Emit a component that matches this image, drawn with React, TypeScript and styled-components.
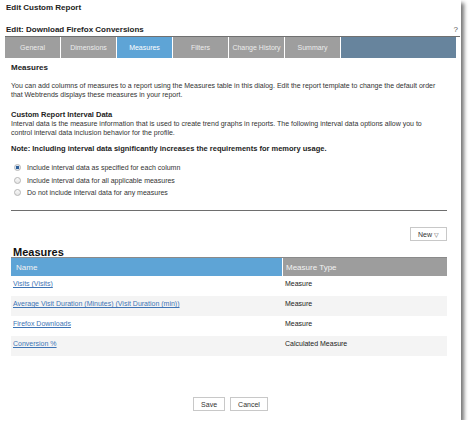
import React, { useState } from 'react';
import styled, { createGlobalStyle } from 'styled-components';

interface MeasureRow {
  id: number
  name: string
  type: string
}

const tabs = ['General', 'Dimensions', 'Measures', 'Filters', 'Change History', 'Summary'];

const intervalOptions = [
  'Include interval data as specified for each column',
  'Include interval data for all applicable measures',
  'Do not include interval data for any measures',
];

const App: React.FC = () => {
  const [activeTab] = useState('Measures');
  const [interval, setInterval] = useState(0);
  const [rows] = useState<MeasureRow[]>([
    { id: 1, name: 'Visits (Visits)', type: 'Measure' },
    { id: 2, name: 'Average Visit Duration (Minutes) (Visit Duration (min))', type: 'Measure' },
    { id: 3, name: 'Firefox Downloads', type: 'Measure' },
    { id: 4, name: 'Conversion %', type: 'Calculated Measure' },
  ]);

  return (
    <>
      <GlobalStyle />
      <Dialog>
        <DialogTitle>Edit Custom Report</DialogTitle>
        <EditHeader>
          <span>Edit: Download Firefox Conversions</span>
          <Help>?</Help>
        </EditHeader>
        <TabBar>
          {tabs.map((tab) => (
            <Tab key={tab} $active={tab === activeTab}>{tab}</Tab>
          ))}
          <TabFiller />
        </TabBar>

        <Content>
          <SectionTitle>Measures</SectionTitle>
          <Paragraph>
            You can add columns of measures to a report using the Measures table in this dialog. Edit the report template to change the default order
            that Webtrends displays these measures in your report.
          </Paragraph>
          <SubTitle>Custom Report Interval Data</SubTitle>
          <Paragraph $tight>
            Interval data is the measure information that is used to create trend graphs in reports. The following interval data options allow you to
            control interval data inclusion behavior for the profile.
          </Paragraph>
          <Note>Note: Including interval data significantly increases the requirements for memory usage.</Note>

          <RadioList>
            {intervalOptions.map((label, i) => (
              <RadioRow key={label} onClick={() => setInterval(i)}>
                <RadioDot $checked={interval === i} />
                {label}
              </RadioRow>
            ))}
          </RadioList>

          <Rule />

          <ToolRow>
            <SmallButton>New <Caret>▽</Caret></SmallButton>
          </ToolRow>

          <TableTitle>Measures</TableTitle>
          <Table>
            <HeadRow>
              <NameHead>Name</NameHead>
              <TypeHead>Measure Type</TypeHead>
            </HeadRow>
            {rows.map((row, i) => (
              <BodyRow key={row.id} $striped={i % 2 === 1}>
                <NameCell><a href="#">{row.name}</a></NameCell>
                <TypeCell>{row.type}</TypeCell>
              </BodyRow>
            ))}
          </Table>
        </Content>

        <Footer>
          <SmallButton>Save</SmallButton>
          <SmallButton>Cancel</SmallButton>
        </Footer>
      </Dialog>
    </>
  );
};

const GlobalStyle = createGlobalStyle`
  body {
    margin: 0;
    background: #fff;
    font-family: "Liberation Sans", Arial, sans-serif;
    color: #222;
  }
`;

const Dialog = styled.div`
  width: 461px;
  height: 420px;
  background: #fff;
  box-shadow: 3px 3px 4px rgba(0, 0, 0, 0.55);
  display: flex;
  flex-direction: column;
  font-size: 7px;
`;

const DialogTitle = styled.div`
  font-weight: bold;
  font-size: 8px;
  padding: 3px 0 0 6px;
  height: 20px;
  box-sizing: border-box;
`;

const EditHeader = styled.div`
  display: flex;
  justify-content: space-between;
  align-items: flex-end;
  font-weight: bold;
  font-size: 8px;
  margin: 0 1px 0 5px;
  padding: 4px 0 2px 1px;
  height: 17px;
  box-sizing: border-box;
  border-bottom: 1px solid #707070;
`;

const Help = styled.span`
  font-weight: normal;
  color: #555;
  padding-right: 2px;
`;

const TabBar = styled.div`
  display: flex;
  gap: 1px;
  margin-left: 5px;
  height: 21px;
`;

const Tab = styled.div<{ $active?: boolean }>`
  width: 55px;
  display: flex;
  align-items: center;
  justify-content: center;
  background: ${(p) => (p.$active ? '#5ea4d6' : '#9e9e9e')};
  color: ${(p) => (p.$active ? '#fff' : '#ececec')};
  font-size: 7px;
`;

const TabFiller = styled.div`
  width: 115px;
  background: #67849d;
`;

const Content = styled.div`
  padding: 0 14px 0 11px;
  flex: 1;
`;

const SectionTitle = styled.div`
  font-weight: bold;
  font-size: 8px;
  margin-top: 5px;
`;

const Paragraph = styled.p<{ $tight?: boolean }>`
  margin: ${(p) => (p.$tight ? '0' : '9px 0 0')};
  max-width: 428px;
  line-height: 9px;
  color: #333;
`;

const SubTitle = styled.div`
  font-weight: bold;
  font-size: 7.5px;
  margin-top: 11px;
  line-height: 9px;
`;

const Note = styled.div`
  font-weight: bold;
  font-size: 7.5px;
  margin-top: 7px;
  line-height: 9px;
`;

const RadioList = styled.div`
  display: flex;
  flex-direction: column;
  gap: 3.5px;
  margin-top: 10px;
  padding-left: 3px;
`;

const RadioRow = styled.label`
  display: flex;
  align-items: center;
  gap: 6px;
  line-height: 9px;
  color: #333;
`;

const RadioDot = styled.span<{ $checked?: boolean }>`
  width: 7px;
  height: 7px;
  border-radius: 50%;
  box-sizing: border-box;
  border: 1px solid #b5b5b5;
  background: ${(p) =>
    p.$checked
      ? 'radial-gradient(circle, #2d5f9a 0 1.5px, #dfe8f3 2px)'
      : 'linear-gradient(#fafafa, #e4e4e4)'};
`;

const Rule = styled.div`
  height: 1px;
  background: #6e6e6e;
  margin-top: 13px;
`;

const ToolRow = styled.div`
  display: flex;
  justify-content: flex-end;
  margin-top: 16px;
`;

const SmallButton = styled.button`
  font-family: inherit;
  font-size: 7px;
  color: #333;
  background: #fff;
  border: 1px solid #c8c8c8;
  height: 14px;
  padding: 0 7px;
  cursor: pointer;
`;

const Caret = styled.span`
  font-size: 6px;
  color: #555;
`;

const TableTitle = styled.div`
  font-weight: bold;
  font-size: 11px;
  margin-top: 5px;
  padding-left: 2px;
  color: #111;
`;

const Table = styled.div`
  border-top: 1px solid #8a8a8a;
  margin-top: -1px;
`;

const HeadRow = styled.div`
  display: grid;
  grid-template-columns: 271px 1fr;
  height: 18px;
  color: #f2f2f2;
  font-size: 8px;
  gap: 1px;
`;

const NameHead = styled.div`
  background: #5ea4d6;
  display: flex;
  align-items: center;
  padding-left: 5px;
`;

const TypeHead = styled.div`
  background: #9d9d9d;
  display: flex;
  align-items: center;
  padding-left: 3px;
`;

const BodyRow = styled.div<{ $striped?: boolean }>`
  display: grid;
  grid-template-columns: 272px 1fr;
  height: 20px;
  background: ${(p) => (p.$striped ? '#f4f4f4' : '#fff')};
`;

const NameCell = styled.div`
  padding: 4px 0 0 2px;
  a {
    color: #3e74b5;
    text-decoration: underline;
  }
`;

const TypeCell = styled.div`
  padding: 4px 0 0 2px;
  color: #222;
`;

const Footer = styled.div`
  display: flex;
  justify-content: center;
  gap: 5px;
  padding: 0 0 9px 0;
`;

export default App;
